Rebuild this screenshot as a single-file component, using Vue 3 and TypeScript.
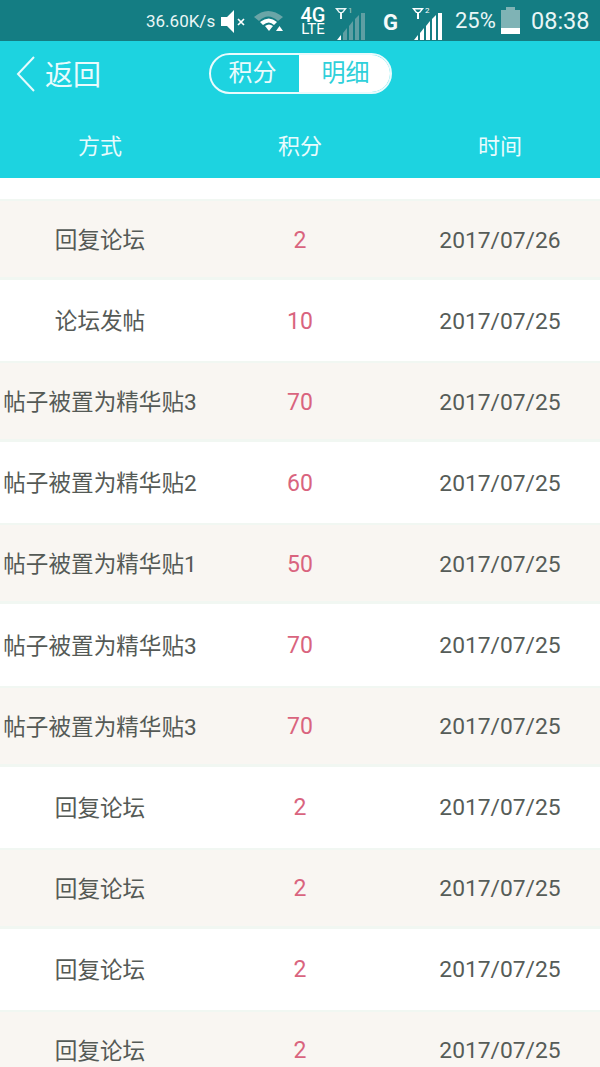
<script setup lang="ts">
interface Row { way: string; points: number; date: string }
const rows: Row[] = [
  { way: '回复论坛', points: 2, date: '2017/07/26' },
  { way: '论坛发帖', points: 10, date: '2017/07/25' },
  { way: '帖子被置为精华贴3', points: 70, date: '2017/07/25' },
  { way: '帖子被置为精华贴2', points: 60, date: '2017/07/25' },
  { way: '帖子被置为精华贴1', points: 50, date: '2017/07/25' },
  { way: '帖子被置为精华贴3', points: 70, date: '2017/07/25' },
  { way: '帖子被置为精华贴3', points: 70, date: '2017/07/25' },
  { way: '回复论坛', points: 2, date: '2017/07/25' },
  { way: '回复论坛', points: 2, date: '2017/07/25' },
  { way: '回复论坛', points: 2, date: '2017/07/25' },
  { way: '回复论坛', points: 2, date: '2017/07/25' },
]
const bars = [
  'M0 27l4-5v5z',
  'M6 27v-7l4-5v12z',
  'M12 27v-14l4-5v19z',
  'M18 27v-21l4-4v25z',
  'M24 27v-27l4-0v27z',
]
</script>

<template>
  <div class="page">
    <div class="status">
      <span class="speed">36.60K/s</span>
      <svg class="ic mute" width="26" height="26" viewBox="0 0 26 26">
        <path d="M1 9h6l7-7v23l-7-7H1z" fill="#fff" />
        <path d="M18 11l6 6M24 11l-6 6" stroke="#fff" stroke-width="1.7" />
      </svg>
      <svg class="ic wifi" width="30" height="24" viewBox="0 0 30 24">
        <path d="M0 8Q14-4 29 8l-5 4Q14 3 5 12z" fill="#6aa5a7" />
        <path d="M6 13Q15 6 23 13l-3 3Q15 11 9 16z" fill="#fff" />
        <path d="M11 17Q15 14 19 17l-4 5z" fill="#fff" />
        <path d="M22 22l3.500-5 3.500 5z" fill="#fff" />
      </svg>
      <span class="net"><b>4G</b><i>LTE</i></span>
      <div class="sim sim1">
        <svg class="ant" width="12" height="12" viewBox="0 0 12 12">
          <path d="M0 1h12L8 6H7v6H5V6H4z" fill="#e9f6f6" />
          <path d="M3 2.500h6L7 5H5z" fill="#147d83" />
        </svg>
        <span class="num dimtext">1</span>
        <svg class="bars" width="28" height="27" viewBox="0 0 28 27">
          <path v-for="(b, i) in bars" :key="i" :d="b" :fill="i > 0 ? '#5f9fa3' : '#fff'" />
        </svg>
      </div>
      <span class="g">G</span>
      <div class="sim">
        <svg class="ant" width="12" height="12" viewBox="0 0 12 12">
          <path d="M0 1h12L8 6H7v6H5V6H4z" fill="#fff" />
          <path d="M3 2.500h6L7 5H5z" fill="#147d83" />
        </svg>
        <span class="num">2</span>
        <svg class="bars" width="28" height="27" viewBox="0 0 28 27">
          <path v-for="(b, i) in bars" :key="i" :d="b" fill="#fff" />
        </svg>
      </div>
      <span class="pct">25%</span>
      <div class="battery"><span class="cap"></span><span class="cell"><span class="fill"></span></span></div>
      <span class="time">08:38</span>
    </div>

    <header class="head">
      <div class="nav">
        <div class="back">
          <svg width="22" height="38" viewBox="0 0 22 38">
            <path d="M19 2L3 19l16 17" fill="none" stroke="#e6fbfd" stroke-width="2" />
          </svg>
          <span>返回</span>
        </div>
        <div class="switch">
          <span class="tab first">积分</span>
          <span class="tab on">明细</span>
        </div>
      </div>
      <div class="cols">
        <span>方式</span><span>积分</span><span>时间</span>
      </div>
    </header>

    <main class="list">
      <div v-for="(r, i) in rows" :key="i" class="row" :class="{ odd: i % 2 === 0 }">
        <span class="way">{{ r.way }}</span>
        <span class="pts">{{ r.points }}</span>
        <span class="date">{{ r.date }}</span>
      </div>
    </main>
  </div>
</template>

<style>
html, body { margin: 0; background: #fff; }
</style>

<style scoped>
.page {
  width: 600px;
  height: 1067px;
  overflow: hidden;
  font-family: "Roboto", "Noto Sans CJK SC", sans-serif;
  background: #fff;
}
.status {
  height: 41px;
  background: #147d83;
  color: #e9f6f6;
  display: flex;
  align-items: center;
  padding-left: 146px;
  box-sizing: border-box;
}
.speed { font-size: 17px; width: 74px; white-space: nowrap; flex: none; }
.ic { flex: none; }
.wifi { margin-left: 8px; }
.net { width: 26px; margin-left: 16px; display: flex; flex-direction: column; align-items: center; color: #fff; flex: none; margin-top: 1px; }
.net b { font-size: 20px; font-weight: 500; line-height: 16px; }
.net i { font-style: normal; font-size: 15px; line-height: 13px; }
.sim { position: relative; width: 30px; height: 28px; flex: none; margin-top: 12px; }
.sim1 { margin-left: 9px; }
.ant { position: absolute; left: 0; top: -6px; }
.num { position: absolute; left: 13px; top: -7px; font-size: 8px; line-height: 10px; color: #fff; }
.dimtext { color: #a9cdcf; }
.bars { position: absolute; left: 2px; bottom: 1px; }
.g { font-size: 22px; font-weight: 700; color: #f4fbfb; width: 17px; margin-left: 18px; flex: none; margin-top: 4px; }
.g + .sim { margin-left: 12px; }
.pct { font-size: 22px; margin-left: 13px; width: 46px; flex: none; white-space: nowrap; }
.battery { width: 19px; height: 27px; display: flex; flex-direction: column; align-items: center; flex: none; }
.cap { width: 9px; height: 3px; background: #7fb3b5; }
.cell { width: 19px; height: 24px; background: #7fb3b5; display: flex; align-items: flex-end; }
.fill { width: 100%; height: 6px; background: #fff; }
.time { font-size: 23.500px; margin-left: 11px; white-space: nowrap; }

.head { height: 137px; background: #1dd3e0; color: #e9fbfd; }
.nav { height: 66px; position: relative; display: flex; align-items: center; justify-content: center; }
.back { position: absolute; left: 15px; top: 14px; display: flex; align-items: center; gap: 8px; font-size: 28px; line-height: 38px; }
.back span { position: relative; top: 2px; }
.back svg { flex: none; }
.switch {
  margin-top: -2px;
  width: 183px;
  height: 41px;
  box-sizing: border-box;
  border: 2px solid #e9fbfd;
  border-radius: 21px;
  display: flex;
  overflow: hidden;
}
.tab { text-align: center; font-size: 24px; line-height: 37px; color: #e9fbfd; }
.tab.first { width: 88px; padding-right: 4px; box-sizing: border-box; }
.tab.on { flex: 1; padding-left: 3px; background: #fff; color: #2fd0da; }
.cols { display: grid; grid-template-columns: 200px 200px 200px; text-align: center; font-size: 22px; line-height: 32px; padding-top: 24px; }

.list { padding-top: 21px; }
.row {
  height: 81.100px;
  box-sizing: border-box;
  display: grid;
  grid-template-columns: 200px 200px 200px;
  align-items: center;
  text-align: center;
  color: #555a56;
  background: #fff;
}
.row.odd { background: #f9f6f2; box-shadow: inset 0 2px 0 #f1f7f2, inset 0 -3px 0 #f1f7f2; }
.way { white-space: nowrap; font-size: 22.600px; margin-top: -2px; }
.pts { color: #d9647e; font-size: 23px; margin-top: 1px; }
.date { font-size: 22.800px; margin-top: 1px; color: #565c58; }
</style>
